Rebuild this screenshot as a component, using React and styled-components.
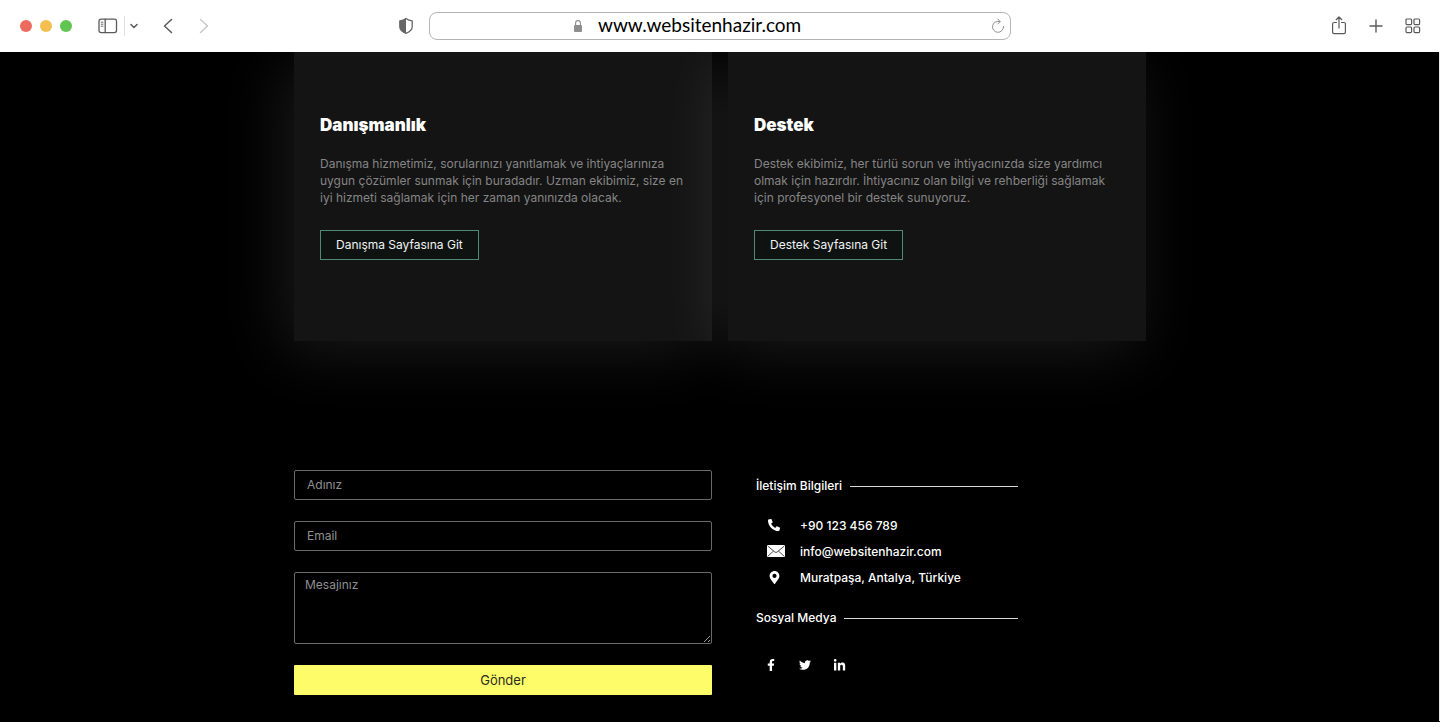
import React from "react";
import styled, { createGlobalStyle } from "styled-components";
import { FaFacebookF, FaTwitter, FaLinkedinIn, FaMapMarkerAlt, FaPhoneAlt } from "react-icons/fa";

const GlobalStyle = createGlobalStyle`
  *, *::before, *::after { box-sizing: border-box; }
  html { background: #000; }
  body { margin: 0; font-family: Inter, "Liberation Sans", sans-serif; font-size: 12px; }
  button, input, textarea { font: inherit; }
`;

const Toolbar = styled.header`
  display: grid;
  grid-template-columns: 1fr minmax(0, 582px) 1fr;
  align-items: center;
  height: 52px;
  background: #fff;
  color: #5a5a5a;
`;

const ToolGroup = styled.div`
  display: flex;
  align-items: center;
  gap: ${(p) => p.$gap || 0}px;
  padding: 0 ${(p) => p.$end || 0}px 0 ${(p) => p.$start || 0}px;
  justify-content: ${(p) => (p.$right ? "flex-end" : "flex-start")};
`;

const Spacer = styled.div`
  flex: 1;
`;

const Dot = styled.span`
  width: 12px;
  height: 12px;
  border-radius: 50%;
  background: ${(p) => p.$color};
`;

const Divider = styled.span`
  width: 1px;
  height: 20px;
  background: #dedede;
`;

const IconButton = styled.button`
  display: flex;
  align-items: center;
  justify-content: center;
  width: ${(p) => p.$w || 20}px;
  height: 24px;
  flex: none;
  padding: 0;
  border: 0;
  background: none;
  color: ${(p) => p.$color || "inherit"};
  cursor: pointer;
`;

const AddressBar = styled.form`
  display: flex;
  align-items: center;
  gap: 15px;
  height: 28px;
  padding: 0 1px 0 143px;
  border: 1px solid #b4b4b4;
  border-radius: 8px;
  color: #8e8e8e;
`;

const AddressInput = styled.input`
  flex: 1;
  min-width: 0;
  height: 26px;
  padding: 0 0 3px;
  border: 0;
  outline: 0;
  background: none;
  color: #000;
  font-family: Lato, sans-serif;
  font-size: 19px;
`;

const Page = styled.main`
  padding-bottom: 26px;
  overflow: hidden;
  background: #000;
  box-shadow: inset -1px 0 #e8e8e8;
`;

const Columns = styled.div`
  display: grid;
  grid-template-columns: 1fr 1fr;
  gap: 16px;
  max-width: 852px;
  margin: 0 auto;
`;

const Card = styled.article`
  padding: 61px 26px 81px;
  background: #141414;
  box-shadow: -10px 10px 60px rgba(255, 255, 255, 0.1);
`;

const CardTitle = styled.h2`
  margin: 0 0 18px;
  color: #fff;
  font-size: 17px;
  font-weight: 900;
  line-height: 24px;
`;

const CardText = styled.p`
  margin: 0 0 24px;
  color: #858585;
  line-height: 17px;
`;

const OutlineLink = styled.a`
  display: inline-flex;
  align-items: center;
  height: 30px;
  padding: 0 15px 1px;
  border: 1px solid #4f8a74;
  background: #0e1211;
  color: #f2f2f2;
  text-decoration: none;
`;

const ContactSection = styled(Columns)`
  margin-top: 129px;
`;

const Form = styled.form`
  display: flex;
  flex-direction: column;
  gap: 21px;
`;

const Field = styled.input`
  width: 100%;
  height: 30px;
  padding: 0 12px 2px;
  border: 1px solid #696969;
  border-radius: 2px;
  outline: 0;
  background: #000;
  color: #fff;
  &::placeholder { color: #8f8f8f; opacity: 1; }
`;

const MessageField = styled(Field)`
  display: block;
  height: 72px;
  padding: 3px 10px;
  line-height: 17px;
  resize: vertical;
`;

const SubmitButton = styled.button`
  height: 30px;
  padding: 0;
  border: 0;
  border-radius: 1px;
  background: #fffc69;
  color: #2b2b20;
  font-size: 13px;
  cursor: pointer;
`;

const Info = styled.section`
  width: 290px;
  padding: 4px 0 0 28px;
  color: #fff;
  font-weight: 500;
`;

const InfoHeading = styled.h3`
  display: flex;
  align-items: center;
  gap: 8px;
  margin: 0;
  font-size: 12px;
  font-weight: 500;
  line-height: 24px;
  &::after { content: ""; flex: 1; height: 1px; background: #d5d9d5; }
`;

const ContactList = styled.ul`
  margin: 14px 0 16px;
  padding: 0 0 0 11px;
  list-style: none;
`;

const ContactRow = styled.li`
  display: grid;
  grid-template-columns: 18px 1fr;
  align-items: center;
  column-gap: 15px;
  height: 26px;
`;

const ContactIcon = styled.span`
  display: flex;
  justify-content: center;
  width: ${(p) => (p.$wide ? 18 : 14)}px;
`;

const SocialList = styled.nav`
  display: flex;
  gap: 20px;
  padding: 28px 0 0 8px;
`;

const SocialLink = styled.a`
  display: flex;
  align-items: center;
  justify-content: center;
  width: 14px;
  height: 14px;
  color: #fff;
`;

const Stroke = ({ w, h, children, sw = 1.3 }) => (
  <svg width={w} height={h} viewBox={`0 0 ${w} ${h}`} fill="none" stroke="currentColor"
    strokeWidth={sw} strokeLinecap="round" strokeLinejoin="round" aria-hidden="true">
    {children}
  </svg>
);

const SidebarIcon = () => (
  <Stroke w={20} h={16}>
    <rect x="1" y="1.2" width="17.5" height="13.4" rx="2" />
    <path d="M7.2 1.2v13.4" />
    <path d="M3.2 4.2h1.8M3.2 6.2h1.8M3.2 8.2h1.8" strokeWidth="0.9" />
  </Stroke>
);

const ShieldIcon = () => (
  <svg width="16" height="18" viewBox="0 0 16 18" aria-hidden="true">
    <path d="M8 1.5C6 3 4 3.6 1.8 3.8v6c0 3.2 3 5.2 6.2 6.5 3.2-1.3 6.2-3.3 6.2-6.5v-6C12 3.6 10 3 8 1.5z"
      fill="none" stroke="#666" strokeWidth="1.3" strokeLinejoin="round" />
    <path d="M8 1.5C6 3 4 3.6 1.8 3.8v6c0 3.2 3 5.2 6.2 6.5z" fill="#666" />
  </svg>
);

const LockIcon = () => (
  <svg width="10" height="14" viewBox="0 0 10 14" aria-hidden="true">
    <rect x="1" y="6" width="8" height="7" rx="1" fill="#8e8e8e" />
    <path d="M2.6 6V4.2a2.4 2.6 0 0 1 4.8 0V6" fill="none" stroke="#8e8e8e" strokeWidth="1.1" />
  </svg>
);

const MailIcon = () => (
  <svg width="18" height="12" viewBox="0 0 18 12" aria-hidden="true">
    <rect width="18" height="12" rx="0.5" fill="#fff" />
    <path d="M0.5 0.8 7.8 7q1.2 0.9 2.4 0L17.5 0.8M0.6 11.4 6.6 6M17.4 11.4 11.4 6"
      fill="none" stroke="#222" strokeWidth="0.8" />
  </svg>
);

const services = [
  {
    title: "Danışmanlık",
    text: "Danışma hizmetimiz, sorularınızı yanıtlamak ve ihtiyaçlarınıza uygun çözümler sunmak için buradadır. Uzman ekibimiz, size en iyi hizmeti sağlamak için her zaman yanınızda olacak.",
    link: "Danışma Sayfasına Git",
  },
  {
    title: "Destek",
    text: "Destek ekibimiz, her türlü sorun ve ihtiyacınızda size yardımcı olmak için hazırdır. İhtiyacınız olan bilgi ve rehberliği sağlamak için profesyonel bir destek sunuyoruz.",
    link: "Destek Sayfasına Git",
  },
];

const contacts = [
  { icon: <FaPhoneAlt size={12} />, text: "+90 123 456 789" },
  { icon: <MailIcon />, text: "info@websitenhazir.com", wide: true },
  { icon: <FaMapMarkerAlt size={13} />, text: "Muratpaşa, Antalya, Türkiye" },
];

const socials = [
  { name: "Facebook", icon: <FaFacebookF size={12} /> },
  { name: "Twitter", icon: <FaTwitter size={12} /> },
  { name: "LinkedIn", icon: <FaLinkedinIn size={13} /> },
];

const stay = (e) => e.preventDefault();

export default function App() {
  return (
    <>
      <GlobalStyle />
      <Toolbar>
        <ToolGroup $start={20} $end={14}>
          <ToolGroup $gap={8} $end={26}>
            <Dot $color="#ec6a5e" />
            <Dot $color="#f4bf4f" />
            <Dot $color="#61c554" />
          </ToolGroup>
          <IconButton aria-label="Sidebar"><SidebarIcon /></IconButton>
          <ToolGroup $start={6} $end={15}>
            <Divider />
            <IconButton $w={18} aria-label="Tab groups">
              <Stroke w={8} h={6} sw={1.5}><path d="M1 1.5 4 4.5 7 1.5" /></Stroke>
            </IconButton>
          </ToolGroup>
          <ToolGroup $gap={16}>
            <IconButton aria-label="Back">
              <Stroke w={10} h={16} sw={1.5}><path d="M8.5 1.5 1.5 8l7 6.5" /></Stroke>
            </IconButton>
            <IconButton $color="#c9c9c9" aria-label="Forward">
              <Stroke w={10} h={16} sw={1.5}><path d="M1.5 1.5 8.5 8l-7 6.5" /></Stroke>
            </IconButton>
          </ToolGroup>
          <Spacer />
          <IconButton $w={18} aria-label="Privacy report"><ShieldIcon /></IconButton>
        </ToolGroup>
        <AddressBar onSubmit={stay}>
          <LockIcon />
          <AddressInput aria-label="Address" defaultValue="www.websitenhazir.com" spellCheck={false} />
          <IconButton $w={22} type="button" aria-label="Reload">
            <Stroke w={14} h={16} sw={1}>
              <path d="M12.5 8.5A5.5 5.5 0 1 1 8.8 3.6M6.8 1l2.4 2.6L6.8 6" />
            </Stroke>
          </IconButton>
        </AddressBar>
        <ToolGroup $right $gap={17} $end={17}>
          <IconButton aria-label="Share">
            <Stroke w={16} h={20} sw={1.2}>
              <path d="M5.5 6.5H3.2A1.6 1.6 0 0 0 1.6 8.1v8a1.6 1.6 0 0 0 1.6 1.6h9.6a1.6 1.6 0 0 0 1.6-1.6v-8A1.6 1.6 0 0 0 12.8 6.5h-2.3M8 12V1.3M5.2 3.7 8 1l2.8 2.7" />
            </Stroke>
          </IconButton>
          <IconButton aria-label="New tab">
            <Stroke w={14} h={14} sw={1.4}><path d="M7 1v12M1 7h12" /></Stroke>
          </IconButton>
          <IconButton aria-label="Tab overview">
            <Stroke w={16} h={16} sw={1.2}>
              <rect x="1" y="1" width="5.6" height="5.6" rx="1" />
              <rect x="9" y="1" width="5.6" height="5.6" rx="1" />
              <rect x="1" y="9" width="5.6" height="5.6" rx="1" />
              <rect x="9" y="9" width="5.6" height="5.6" rx="1" />
            </Stroke>
          </IconButton>
        </ToolGroup>
      </Toolbar>
      <Page>
        <Columns>
          {services.map((s) => (
            <Card key={s.title}>
              <CardTitle>{s.title}</CardTitle>
              <CardText>{s.text}</CardText>
              <OutlineLink href="#">{s.link}</OutlineLink>
            </Card>
          ))}
        </Columns>
        <ContactSection>
          <Form onSubmit={stay}>
            <Field type="text" aria-label="Adınız" placeholder="Adınız" />
            <Field type="email" aria-label="Email" placeholder="Email" />
            <MessageField as="textarea" aria-label="Mesajınız" placeholder="Mesajınız" />
            <SubmitButton type="submit">Gönder</SubmitButton>
          </Form>
          <Info>
            <InfoHeading>İletişim Bilgileri</InfoHeading>
            <ContactList>
              {contacts.map((c) => (
                <ContactRow key={c.text}>
                  <ContactIcon $wide={c.wide}>{c.icon}</ContactIcon>
                  <span>{c.text}</span>
                </ContactRow>
              ))}
            </ContactList>
            <InfoHeading>Sosyal Medya</InfoHeading>
            <SocialList aria-label="Sosyal Medya">
              {socials.map((s) => (
                <SocialLink key={s.name} href="#" aria-label={s.name}>{s.icon}</SocialLink>
              ))}
            </SocialList>
          </Info>
        </ContactSection>
      </Page>
    </>
  );
}
